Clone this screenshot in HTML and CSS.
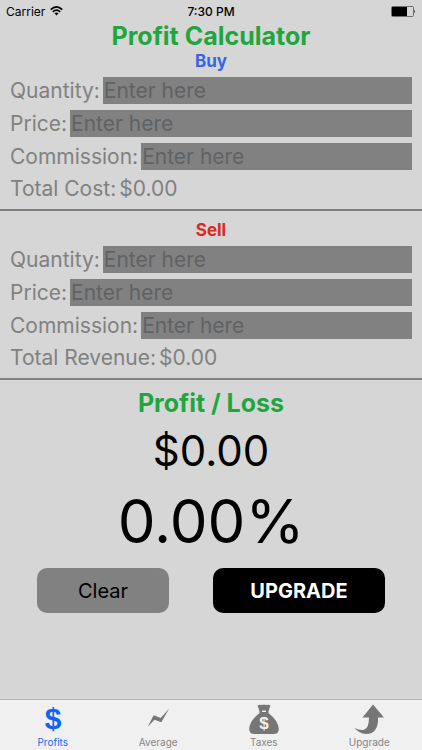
FILE: index.html
```html
<!DOCTYPE html>
<html lang="en">
<head>
    <meta charset="UTF-8">
    <meta name="viewport" content="width=device-width, initial-scale=1.0">
    <title>Profit Calculator</title>
    <link rel="stylesheet" href="styles.css">
</head>

<body>
    <div class="status-bar">
        <div class="carrier">
            <span>Carrier</span>
            <svg width="13" height="10" viewBox="0 0 13 10" fill="none" stroke="#000" stroke-width="1.6">
                <path d="M0.7 3.7 Q6.5 -1.9 12.3 3.7"/>
                <path d="M2.8 5.9 Q6.5 2.5 10.2 5.9"/>
                <path d="M4.5 7.3 Q6.5 5.7 8.5 7.3 L6.5 9.6 Z" fill="#000" stroke="none"/>
            </svg>
        </div>
        <span class="clock">7:30 PM</span>
        <div class="battery">
            <svg width="25" height="11" viewBox="0 0 25 11">
                <rect x="0.5" y="0.5" width="22" height="10" rx="1.2" fill="none" stroke="#555" stroke-width="0.8"/>
                <rect x="1" y="1" width="15" height="9" fill="#000"/>
                <path d="M23.3 3.7 Q25 5.5 23.3 7.3 Z" fill="#000"/>
            </svg>
        </div>
    </div>

    <main class="calculator">
        <h1>Profit Calculator</h1>

        <section class="trade">
            <h2 class="buy">Buy</h2>
            <div class="row">
                <label for="buy-quantity">Quantity:</label>
                <input type="text" id="buy-quantity" placeholder="Enter here">
            </div>
            <div class="row">
                <label for="buy-price">Price:</label>
                <input type="text" id="buy-price" placeholder="Enter here">
            </div>
            <div class="row">
                <label for="buy-commission">Commission:</label>
                <input type="text" id="buy-commission" placeholder="Enter here">
            </div>
            <div class="row total">
                <span>Total Cost:</span>
                <span>$0.00</span>
            </div>
        </section>

        <section class="trade sell-section">
            <h2 class="sell">Sell</h2>
            <div class="row">
                <label for="sell-quantity">Quantity:</label>
                <input type="text" id="sell-quantity" placeholder="Enter here">
            </div>
            <div class="row">
                <label for="sell-price">Price:</label>
                <input type="text" id="sell-price" placeholder="Enter here">
            </div>
            <div class="row">
                <label for="sell-commission">Commission:</label>
                <input type="text" id="sell-commission" placeholder="Enter here">
            </div>
            <div class="row total">
                <span>Total Revenue:</span>
                <span>$0.00</span>
            </div>
        </section>

        <section class="result">
            <h2>Profit / Loss</h2>
            <p class="amount">$0.00</p>
            <p class="percent">0.00%</p>
        </section>

        <div class="actions">
            <button class="clear" type="button">Clear</button>
            <button class="upgrade" type="button">UPGRADE</button>
        </div>
    </main>

    <nav class="tabs">
        <a href="#profits" class="active">
            <svg width="32" height="32" viewBox="0 0 32 32">
                <text x="16" y="26" text-anchor="middle" font-size="30" font-weight="700">$</text>
            </svg>
            <span>Profits</span>
        </a>
        <a href="#average">
            <svg width="32" height="32" viewBox="0 0 32 32">
                <path d="M5.7 23.7 L11.7 12.3 L18.7 14.9 L27 5.7 L19.3 19.2 L12.5 16.8 Z"/>
            </svg>
            <span>Average</span>
        </a>
        <a href="#taxes">
            <svg width="32" height="32" viewBox="0 0 32 32">
                <path d="M9.5 2.5 Q12 1.3 14 2 Q16 1.2 18 2 Q20.5 1.3 22.5 2.5 L20.5 8 H11.5 Z"/>
                <path d="M11.5 7 H20.5 V10 Q30.5 18 30.8 26 Q30.8 31 25.5 31 H6.5 Q1.2 31 1.2 26 Q1.5 18 11.5 10 Z"/>
                <rect class="cutout" x="14" y="7.6" width="4" height="1.4"/>
                <text class="cutout" x="16" y="25.5" text-anchor="middle" font-size="17" font-weight="700">$</text>
            </svg>
            <span>Taxes</span>
        </a>
        <a href="#upgrade">
            <svg width="32" height="32" viewBox="0 0 32 32">
                <path d="M20 1.5 L31 14.5 H25 Q25.5 22 22.5 26.5 Q19.5 31 13 31 Q6 30.5 1.5 25 Q7.5 28 11.5 26.5 Q16 24.5 16 14.5 H9.5 Z"/>
            </svg>
            <span>Upgrade</span>
        </a>
    </nav>
</body>
</html>
```

FILE: styles.css
```css
* {
    box-sizing: border-box;
}

body {
    font-family: 'Inter', sans-serif;
    margin: 0;
    min-height: 100vh;
    display: flex;
    flex-direction: column;
    background-color: #d6d6d6;
    color: #000;
}

h1,
h2,
p {
    margin: 0;
    text-align: center;
}

.status-bar {
    display: grid;
    grid-template-columns: 1fr auto 1fr;
    align-items: center;
    height: 22px;
    padding: 0 6px;
    font-size: 12px;
}

.carrier {
    display: flex;
    align-items: center;
    gap: 5px;
}

.clock {
    font-weight: 500;
}

.battery {
    display: flex;
    justify-content: flex-end;
}

.calculator {
    flex: 1;
}

h1,
.result h2 {
    font-size: 25px;
    line-height: 29px;
    font-weight: 700;
    color: #1fa63f;
}

.trade {
    display: flex;
    flex-direction: column;
    gap: 6px;
    padding: 0 10px 9px;
    border-bottom: 2px solid #7f807f;
}

.trade h2 {
    font-size: 17px;
    line-height: 20px;
    font-weight: 700;
}

.trade .buy {
    color: #3864e8;
}

.trade .sell {
    color: #d92b20;
}

.sell-section {
    padding-top: 9px;
}

.row {
    display: flex;
    align-items: center;
    gap: 3px;
    height: 27px;
    font-size: 21px;
    color: #808180;
}

.total {
    height: 24px;
}

.row input {
    flex: 1;
    min-width: 0;
    height: 27px;
    padding: 0 1px;
    border: none;
    border-radius: 0;
    background-color: #808180;
    font: inherit;
    color: #000;
}

.row input::placeholder {
    color: #616265;
    opacity: 1;
}

.result {
    padding-top: 9px;
}

.amount {
    font-size: 42px;
    line-height: 66px;
}

.percent {
    font-size: 60px;
    line-height: 74px;
}

.actions {
    display: flex;
    gap: 44px;
    padding: 10px 37px;
}

.actions button {
    height: 45px;
    padding: 0;
    border: none;
    border-radius: 10px;
    font-family: inherit;
    font-size: 20px;
    cursor: pointer;
}

.actions .clear {
    flex: 132;
    background-color: #808180;
    color: #000;
}

.actions .upgrade {
    flex: 172;
    background-color: #000;
    color: #fff;
    font-weight: 700;
}

.tabs {
    display: grid;
    grid-template-columns: repeat(4, 1fr);
    height: 51px;
    padding-top: 3px;
    border-top: 1px solid #b5b5b5;
    background-color: #f0f0f0;
}

.tabs a {
    display: flex;
    flex-direction: column;
    align-items: center;
    font-size: 10px;
    line-height: 14px;
    color: #858585;
    text-decoration: none;
}

.tabs svg {
    fill: #767676;
    font-family: 'Liberation Sans', sans-serif;
    overflow: visible;
}

.tabs .active {
    color: #1a66f5;
}

.tabs .active svg {
    fill: #0f62fa;
}

.tabs .cutout {
    fill: #f0f0f0;
}
```
